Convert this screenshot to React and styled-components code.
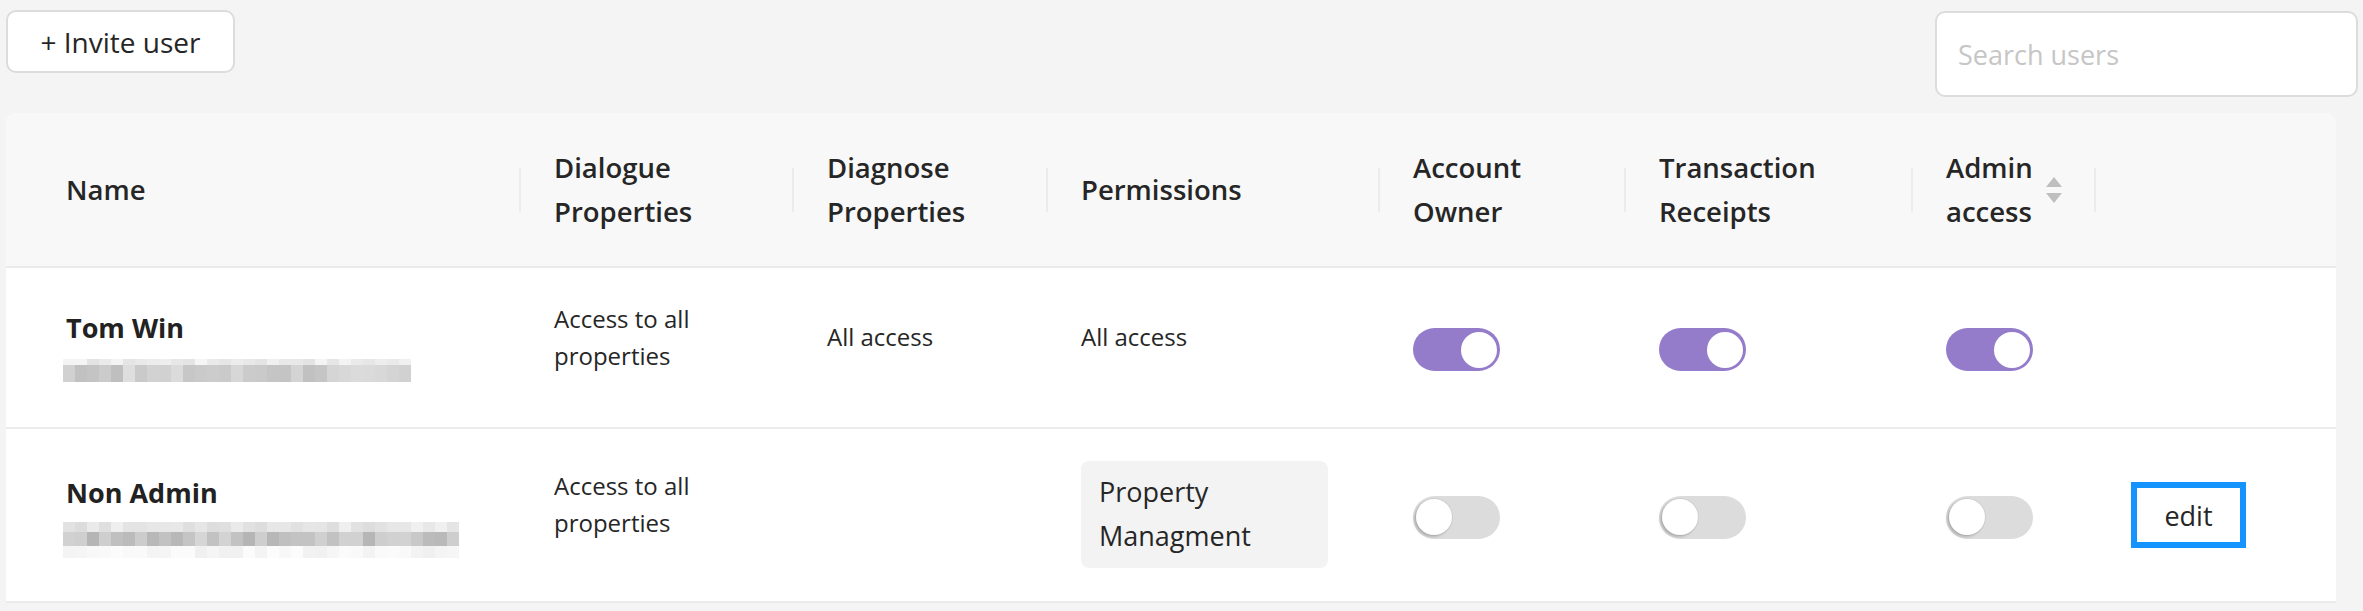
import React from 'react';
import styled, { createGlobalStyle } from 'styled-components';

const GlobalStyle = createGlobalStyle`
  html, body {
    margin: 0;
    padding: 0;
    background: #f4f4f4;
  }
  body {
    font-family: "Open Sans", "Noto Sans", sans-serif;
    color: #262626;
  }
`;

const Page = styled.div`
  padding: 10px 5px 0 6px;
  box-sizing: border-box;
`;

const Toolbar = styled.div`
  display: flex;
  justify-content: space-between;
  align-items: flex-start;
`;

const InviteButton = styled.button`
  width: 229px;
  height: 63px;
  background: #fff;
  border: 2px solid #dcdcdc;
  border-radius: 10px;
  font-family: inherit;
  font-size: 28px;
  color: #262626;
  cursor: pointer;
`;

const SearchInput = styled.input`
  width: 423px;
  height: 86px;
  margin-top: 1px;
  box-sizing: border-box;
  background: #fff;
  border: 2px solid #dcdcdc;
  border-radius: 10px;
  padding: 0 21px;
  font-family: inherit;
  font-size: 27px;
  color: #262626;
  outline: none;

  &::placeholder {
    color: #c6c6c6;
  }
`;

const Card = styled.div`
  margin: 16px 22px 0 0;
  border-radius: 10px 10px 0 0;
  overflow: hidden;
  background: #fff;
`;

const Table = styled.table`
  width: 100%;
  border-collapse: collapse;
  table-layout: fixed;
`;

const HeadCell = styled.th`
  position: relative;
  height: 153px;
  padding: 0 0 0 ${p => (p.$first ? 60 : 33)}px;
  background: #f8f8f8;
  border-bottom: 2px solid #ebebeb;
  text-align: left;
  vertical-align: middle;
  font-size: 27.5px;
  line-height: 44px;
  font-weight: 600;
  color: #262626;

  &::after {
    content: '';
    display: ${p => (p.$last ? 'none' : 'block')};
    position: absolute;
    right: 0;
    top: 50%;
    width: 2px;
    height: 44px;
    margin-top: -22px;
    background: #ececec;
  }
`;

const HeadInner = styled.div`
  display: flex;
  align-items: center;
  gap: 13px;
`;

// $lift moves the centred content up (positive) or down (negative);
// the content height is reduced by the same padding so the row keeps its height
const Cell = styled.td`
  height: ${p => p.$height - Math.abs(p.$lift || 0) * 2}px;
  padding: ${p => Math.max(0, -(p.$lift || 0)) * 2}px 0 ${p => Math.max(0, p.$lift || 0) * 2}px
    ${p => (p.$first ? 60 : 33)}px;
  border-bottom: 2px solid #ebebeb;
  vertical-align: middle;
  font-size: 24px;
  line-height: 37px;
  color: #262626;
`;

const UserName = styled.div`
  font-size: 27px;
  line-height: 42px;
  font-weight: 700;
  color: #222;
`;

const MosaicGrid = styled.div`
  display: grid;
  grid-template-columns: repeat(${p => p.$cols}, 12px);
  grid-template-rows: ${p => p.$rows};
  margin: ${p => p.$offset}px 0 0 -3px;
  width: max-content;
`;

const Tag = styled.div`
  display: inline-block;
  width: 247px;
  box-sizing: border-box;
  padding: 9px 18px 10px;
  background: #f3f3f3;
  border-radius: 8px;
  font-size: 27px;
  line-height: 44px;
`;

const Track = styled.span`
  display: flex;
  align-items: center;
  justify-content: ${p => (p.$on ? 'flex-end' : 'flex-start')};
  width: 87px;
  height: 43px;
  padding: 0 3px;
  box-sizing: border-box;
  border-radius: 22px;
  background: ${p => (p.$on ? '#947cca' : '#dcdcdc')};
`;

const Knob = styled.span`
  width: 36px;
  height: 36px;
  border-radius: 50%;
  background: #fff;
  box-shadow: ${p => (p.$on ? 'none' : '-2px 2px 3px rgba(0,0,0,0.18), 0 0 0 1px rgba(0,0,0,0.06)')};
`;

const EditButton = styled.button`
  display: block;
  width: 115px;
  height: 66px;
  margin-left: 2px;
  background: #fff;
  border: 6px solid #1594ff;
  border-radius: 0;
  font-family: inherit;
  font-size: 27px;
  color: #262626;
  cursor: pointer;
`;

const SortIcon = () => (
  <svg width="16" height="26" viewBox="0 0 16 26">
    <path d="M8 0 L16 10 L0 10 Z" fill="#bfbfbf" />
    <path d="M0 16 L16 16 L8 26 Z" fill="#bfbfbf" />
  </svg>
);

const Toggle = ({ on }) => (
  <Track $on={on}>
    <Knob $on={on} />
  </Track>
);

// pixelated stand-in for the blurred e-mail address
const Mosaic = ({ cols, rows, tones, seed, offset }) => {
  const blocks = [];
  let s = seed;
  const rand = () => {
    s = (s * 9301 + 49297) % 233280;
    return s / 233280;
  };
  tones.forEach((range, r) => {
    for (let c = 0; c < cols; c++) {
      const v = Math.round(range[0] + rand() * (range[1] - range[0]));
      blocks.push(<span key={r + '-' + c} style={{ background: `rgb(${v},${v},${v})` }} />);
    }
  });
  return (
    <MosaicGrid $cols={cols} $rows={rows} $offset={offset}>
      {blocks}
    </MosaicGrid>
  );
};

const columns = [
  { w: 515, label: 'Name' },
  { w: 273, label: ['Dialogue', 'Properties'] },
  { w: 254, label: ['Diagnose', 'Properties'] },
  { w: 332, label: 'Permissions' },
  { w: 246, label: ['Account', 'Owner'] },
  { w: 287, label: ['Transaction', 'Receipts'] },
  { w: 183, label: ['Admin', 'access'], sort: true },
  { w: 240, label: '' },
];

export default function App() {
  return (
    <>
      <GlobalStyle />
      <Page>
        <Toolbar>
          <InviteButton>+ Invite user</InviteButton>
          <SearchInput placeholder="Search users" />
        </Toolbar>
        <Card>
          <Table>
            <colgroup>
              {columns.map((c, i) => (
                <col key={i} style={{ width: c.w }} />
              ))}
            </colgroup>
            <thead>
              <tr>
                {columns.map((c, i) => (
                  <HeadCell key={i} $first={i === 0} $last={i === columns.length - 1}>
                    <HeadInner>
                      <span>
                        {Array.isArray(c.label) ? (
                          <>
                            {c.label[0]}
                            <br />
                            {c.label[1]}
                          </>
                        ) : (
                          c.label
                        )}
                      </span>
                      {c.sort && <SortIcon />}
                    </HeadInner>
                  </HeadCell>
                ))}
              </tr>
            </thead>
            <tbody>
              <tr>
                <Cell $first $height={159} $lift={3}>
                  <UserName>Tom Win</UserName>
                  <Mosaic
                    cols={29}
                    rows="6px 17px"
                    tones={[[226, 246], [190, 222]]}
                    seed={17}
                    offset={10}
                  />
                </Cell>
                <Cell $height={159} $lift={11}>Access to all properties</Cell>
                <Cell $height={159} $lift={11}>All access</Cell>
                <Cell $height={159} $lift={11}>All access</Cell>
                <Cell $height={159} $lift={-2}><Toggle on /></Cell>
                <Cell $height={159} $lift={-2}><Toggle on /></Cell>
                <Cell $height={159} $lift={-2}><Toggle on /></Cell>
                <Cell $height={159} />
              </tr>
              <tr>
                <Cell $first $height={172}>
                  <UserName>Non Admin</UserName>
                  <Mosaic
                    cols={33}
                    rows="10px 14px 12px"
                    tones={[[220, 240], [180, 215], [240, 252]]}
                    seed={53}
                    offset={8}
                  />
                </Cell>
                <Cell $height={172} $lift={11}>Access to all properties</Cell>
                <Cell $height={172} />
                <Cell $height={172} $lift={1}>
                  <Tag>Property Managment</Tag>
                </Cell>
                <Cell $height={172} $lift={-2}><Toggle /></Cell>
                <Cell $height={172} $lift={-2}><Toggle /></Cell>
                <Cell $height={172} $lift={-2}><Toggle /></Cell>
                <Cell $height={172}>
                  <EditButton>edit</EditButton>
                </Cell>
              </tr>
            </tbody>
          </Table>
        </Card>
      </Page>
    </>
  );
}
